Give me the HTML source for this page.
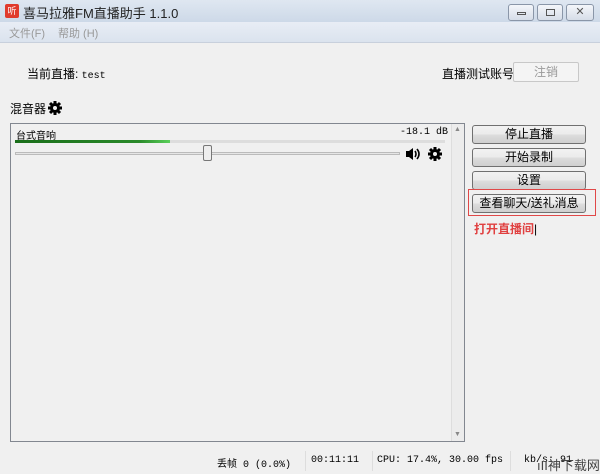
<!DOCTYPE html><html><head><meta charset="utf-8"><style>
*{margin:0;padding:0;box-sizing:border-box}
body{width:600px;height:474px;overflow:hidden;background:#f0f0f0;font-family:"Liberation Sans","Noto Sans CJK SC",sans-serif;font-size:12px;color:#000;position:relative}
.a{position:absolute}
.btn{position:absolute;left:472px;width:114px;height:19px;border:1px solid #707070;border-radius:3px;background:linear-gradient(#f2f2f2,#ebebeb 50%,#dddddd 51%,#cfcfcf);text-align:center;line-height:17px;font-size:12px}
.mono{font-family:"Liberation Mono","Noto Sans CJK SC",monospace;font-size:10px}
.wb{position:absolute;top:4px;height:17px;border:1px solid #8a96a8;border-radius:3px;background:linear-gradient(#f4f6fa,#d6dde8)}
</style></head><body>
<svg width="0" height="0" style="position:absolute"><defs><g id="gear"><circle cx="8" cy="8" r="5" fill="#000"/><g stroke="#000" stroke-width="3"><line x1="8" y1="1" x2="8" y2="15"/><line x1="1" y1="8" x2="15" y2="8"/><line x1="3" y1="3" x2="13" y2="13"/><line x1="13" y1="3" x2="3" y2="13"/></g><circle cx="8" cy="8" r="2" fill="#f0f0f0"/></g></defs></svg>
<div class="a" style="left:0;top:0;width:600px;height:22px;background:linear-gradient(#dfe7f1,#cdd9e8)"></div>
<div class="a" style="left:5px;top:4px;width:14px;height:14px;background:#e03a2c;border-radius:2px;color:#fff;font-size:9px;line-height:14px;text-align:center">听</div>
<div class="a" style="left:23px;top:3px;font-size:13px;color:#222">喜马拉雅FM直播助手 1.1.0</div>
<div class="wb" style="left:508px;width:26px"><div class="a" style="left:8px;top:7px;width:9px;height:3px;border:1px solid #555"></div></div>
<div class="wb" style="left:537px;width:26px"><div class="a" style="left:8px;top:4px;width:9px;height:7px;border:1px solid #555"></div></div>
<div class="wb" style="left:566px;width:28px;font-size:11px;text-align:center;color:#555;line-height:14px">✕</div>
<div class="a" style="left:0;top:22px;width:600px;height:20px;background:linear-gradient(#e8edf5,#dbe3ee)"></div>
<div class="a" style="left:9px;top:25px;color:#999;font-size:11px">文件(F)</div>
<div class="a" style="left:58px;top:25px;color:#999;font-size:11px">帮助 (H)</div>
<div class="a" style="left:0;top:42px;width:600px;height:1px;background:#c8d0dc"></div>
<div class="a" style="left:27px;top:65px">当前直播: <span class="mono">test</span></div>
<div class="a" style="left:442px;top:65px">直播测试账号</div>
<div class="a" style="left:513px;top:62px;width:66px;height:20px;border:1px solid #c8c8c8;border-radius:2px;background:#f4f4f4;color:#999;text-align:center;line-height:18px">注销</div>
<div class="a" style="left:10px;top:100px">混音器</div>
<svg class="a" style="left:47px;top:100px" width="16" height="16"><use href="#gear"/></svg>
<div class="a" style="left:10px;top:123px;width:455px;height:319px;border:1px solid #828790;background:#f0f0f0"></div>
<div class="a" style="left:451px;top:124px;width:13px;height:317px;background:#ececec;border-left:1px solid #ddd"></div>
<div class="a" style="left:454px;top:126px;font-size:7px;color:#888">▲</div>
<div class="a" style="left:454px;top:431px;font-size:7px;color:#888">▼</div>
<div class="a" style="left:16px;top:127px;font-size:10px">台式音响</div>
<div class="a mono" style="left:400px;top:127px">-18.1 dB</div>
<div class="a" style="left:15px;top:140px;width:430px;height:3px;background:#ddd"></div>
<div class="a" style="left:15px;top:140px;width:155px;height:3px;background:linear-gradient(90deg,#1a6e1a,#2a8a2a 80%,#5ad05a)"></div>
<div class="a" style="left:15px;top:152px;width:385px;height:3px;border:1px solid #bbb;background:#e6e6e6"></div>
<div class="a" style="left:203px;top:145px;width:9px;height:16px;border:1px solid #777;border-radius:2px;background:#eee"></div>
<svg class="a" style="left:405px;top:147px" width="16" height="14"><path d="M1 4h3l4-3v12l-4-3H1z" fill="#000"/><path d="M10 4q2 3 0 6M12 2q4 5 0 10" stroke="#000" stroke-width="1.6" fill="none"/></svg>
<svg class="a" style="left:427px;top:146px" width="16" height="16"><use href="#gear"/></svg>
<div class="btn" style="top:125px">停止直播</div>
<div class="btn" style="top:148px">开始录制</div>
<div class="btn" style="top:171px">设置</div>
<div class="btn" style="top:194px">查看聊天/送礼消息</div>
<div class="a" style="left:468px;top:189px;width:128px;height:27px;border:1px solid #e04848"></div>
<div class="a" style="left:474px;top:220px;color:#e04040;font-weight:bold;font-size:12px">打开直播间<span style="color:#000;font-weight:normal">|</span></div>
<div class="a mono" style="left:217px;top:455px;font-size:10px">丢帧 0 (0.0%)</div>
<div class="a" style="left:305px;top:451px;width:1px;height:20px;background:#ddd"></div>
<div class="a mono" style="left:311px;top:455px">00:11:11</div>
<div class="a" style="left:372px;top:451px;width:1px;height:20px;background:#ddd"></div>
<div class="a mono" style="left:377px;top:455px">CPU: 17.4%, 30.00 fps</div>
<div class="a" style="left:510px;top:451px;width:1px;height:20px;background:#ddd"></div>
<div class="a mono" style="left:524px;top:455px">kb/s: 91</div>
<div class="a" style="left:537px;top:455px;font-size:13px;color:#444">ıII神下载网</div>
</body></html>
